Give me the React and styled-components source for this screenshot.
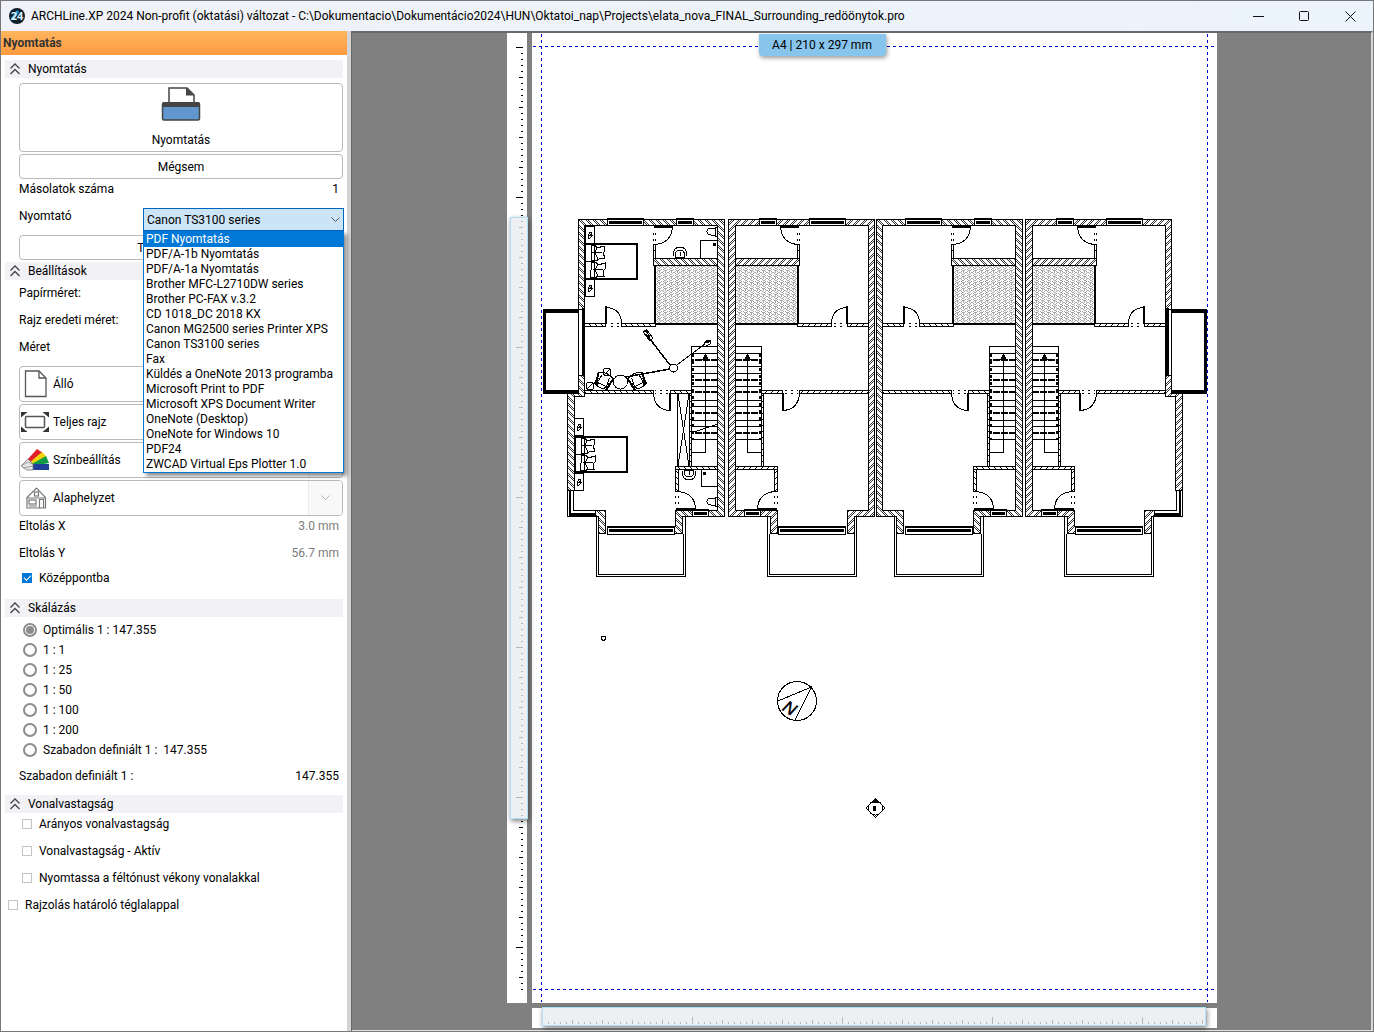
import React, { useState } from "react";
import styled, { createGlobalStyle, css } from "styled-components";

const GlobalStyle = createGlobalStyle`
  * { box-sizing: border-box; }
  html, body { margin: 0; padding: 0; }
  body { font-family: Roboto, "Open Sans", sans-serif; font-size: 12px; line-height: 16px; color: #000; }
  button, input, select { font: inherit; color: inherit; }
`;

/* ---------- window frame ---------- */

const Window = styled.div`
  display: flex;
  flex-direction: column;
  height: 100vh;
  min-height: 940px;
  border: 1px solid #777;
  background: #fff;
`;

const TitleBar = styled.header`
  display: flex;
  align-items: center;
  height: 30px;
  flex: none;
  padding-left: 8px;
  background: linear-gradient(90deg, #f0f2f8, #ebf3fb);
`;

const TitleText = styled.h1`
  flex: 1;
  min-width: 0;
  margin: 0 0 0 6px;
  font-size: 12px;
  font-weight: 400;
  white-space: nowrap;
  overflow: hidden;
  text-overflow: ellipsis;
`;

const WindowButton = styled.button`
  display: grid;
  place-items: center;
  width: 46px;
  height: 30px;
  padding: 0;
  border: 0;
  background: transparent;
`;

const Body = styled.div`
  display: grid;
  grid-template-columns: 346px 5px minmax(0, 1fr);
  flex: 1;
  min-height: 0;
`;

const Splitter = styled.div`
  background: #d4d4d4;
  border-right: 1px solid #696969;
`;

/* ---------- side panel ---------- */

const Panel = styled.aside`
  display: flex;
  flex-direction: column;
  min-width: 0;
`;

const PanelTitle = styled.h2`
  margin: 0 0 5px;
  padding: 0 2px;
  height: 24px;
  font-size: 12px;
  font-weight: 700;
  line-height: 24px;
  color: #333;
  background: linear-gradient(#ffb55f, #ff9a40);
`;

const Section = styled.section`
  display: flex;
  flex-direction: column;
  padding: 0 4px;
  margin-bottom: ${(p) => p.$after || 0}px;
`;

const SectionHead = styled.button`
  display: flex;
  align-items: center;
  gap: 8px;
  height: 18px;
  padding: 0 5px;
  border: 0;
  background: #f1f1f6;
  text-align: left;
`;

const SectionBody = styled.div`
  display: flex;
  flex-direction: column;
  gap: ${(p) => p.$gap || 0}px;
  padding: ${(p) => p.$top || 0}px 0 0 14px;
`;

const Group = styled.div`
  display: flex;
  flex-direction: column;
  gap: ${(p) => p.$gap || 0}px;
  padding-top: ${(p) => p.$top || 0}px;
`;

const frame = css`
  border: 1px solid #b9b9b9;
  border-radius: 4px;
  background: #fff;
`;

const PushButton = styled.button`
  ${frame}
  height: 25px;
  padding: 0;
`;

const PrintButton = styled(PushButton)`
  display: flex;
  flex-direction: column;
  align-items: center;
  justify-content: space-between;
  height: 69px;
  padding: 2px 0 3px;
`;

const SplitBox = styled.div`
  ${frame}
  display: flex;
  height: 36px;
  overflow: hidden;
`;

const SplitMain = styled.button`
  display: flex;
  flex: 1;
  align-items: center;
  gap: 4px;
  padding: 0 1px;
  border: 0;
  background: transparent;
`;

const SplitArrow = styled.button`
  display: grid;
  place-items: center;
  width: 34px;
  padding: 0;
  border: 0;
  border-left: 1px solid #ececec;
  background: #f8f8f8;
`;

const Field = styled.div`
  display: flex;
  justify-content: space-between;
  height: 20px;
  line-height: 20px;
  padding-right: 4px;
`;

const ValueInput = styled.input`
  width: 100px;
  height: 20px;
  padding: 0;
  border: 0;
  background: transparent;
  text-align: right;
  &:disabled { color: #7c7c7c; }
`;

const PrinterRow = styled.div`
  position: relative;
  display: flex;
  justify-content: space-between;
  height: 25px;
  line-height: 20px;
`;

const ComboWrap = styled.div`
  position: relative;
  align-self: flex-end;
  width: 201px;
  margin-right: -1px;
`;

const Combo = styled.select`
  display: block;
  width: 100%;
  height: 23px;
  padding: 0 20px 0 3px;
  border: 1px solid #0067c0;
  border-radius: 0;
  background: #cce4f7;
  appearance: none;
`;

const ComboArrow = styled.svg`
  position: absolute;
  right: 4px;
  top: 9px;
  pointer-events: none;
`;

const OptionList = styled.ul`
  position: absolute;
  z-index: 5;
  top: 23px;
  left: 0;
  right: 0;
  margin: 0;
  padding: 0;
  list-style: none;
  border: 1px solid #0078d7;
  background: #fff;
  box-shadow: 3px 3px 4px rgba(0, 0, 0, 0.45);
`;

const Option = styled.li`
  height: 15px;
  padding: 0 2px;
  line-height: 15px;
  white-space: nowrap;
  background: ${(p) => (p.$active ? "#0078d7" : "transparent")};
  color: ${(p) => (p.$active ? "#fff" : "#000")};
`;

const Choice = styled.label`
  display: flex;
  align-items: center;
  gap: ${(p) => (p.$radio ? 6 : 7)}px;
  height: 20px;
  padding-left: ${(p) => (p.$radio ? 4 : 3)}px;
  white-space: pre;
`;

const CheckInput = styled.input`
  appearance: none;
  display: grid;
  place-items: center;
  width: 10px;
  height: 10px;
  margin: 0;
  border: 1px solid #c4c4c4;
  background: #fff;
  &:checked { border-color: #0078d7; background: #0078d7; }
  &:checked::after {
    content: "";
    width: 6px;
    height: 3px;
    border: solid #fff;
    border-width: 0 0 1px 1px;
    transform: translateY(-1px) rotate(-45deg);
  }
`;

const RadioInput = styled.input`
  appearance: none;
  display: grid;
  place-items: center;
  width: 14px;
  height: 14px;
  margin: 0;
  border: 2px solid #8c8c8c;
  border-radius: 50%;
  background: #fff;
  &:checked::after {
    content: "";
    width: 8px;
    height: 8px;
    border-radius: 50%;
    background: #8c8c8c;
  }
`;

/* ---------- preview ---------- */

const Stage = styled.main`
  display: flex;
  justify-content: center;
  min-width: 0;
  padding: 0 0 2px;
  background: #808080;
  border-top: 2px solid #696969;
  border-right: 2px solid #d8d8d8;
  border-bottom: 1px solid #e4e4e4;
`;

const Sheet = styled.div`
  display: grid;
  grid-template-columns: 20px minmax(0, 685px);
  grid-template-rows: minmax(0, 1fr) 20px;
  gap: 5px;
  width: 710px;
  max-width: 100%;
`;

const RulerBox = styled.div`
  position: relative;
  min-width: 0;
  background: #fff;
  grid-column: ${(p) => (p.$horizontal ? 2 : 1)};
`;

const Slider = styled.div`
  position: absolute;
  z-index: 1;
  border: 1px solid #aee0f8;
  background: rgba(233, 234, 238, 0.78);
  box-shadow: 1px 2px 5px rgba(0, 0, 0, 0.5);
  ${(p) =>
    p.$horizontal
      ? "left: 10px; right: 11px; top: -1px; height: 19px;"
      : "left: 3px; width: 18px; top: 19%; height: 62%;"}
`;

const Paper = styled.div`
  position: relative;
  min-width: 0;
  min-height: 0;
  background: #fff;
`;

const SizeBadge = styled.div`
  position: absolute;
  top: 1px;
  left: 227px;
  width: 127px;
  height: 22px;
  border-radius: 0 0 4px 4px;
  line-height: 22px;
  text-align: center;
  white-space: nowrap;
  background: #88c5ec;
  box-shadow: 1px 2px 4px rgba(0, 0, 0, 0.4);
`;

const Art = styled.svg`
  display: block;
  width: 100%;
  height: 100%;
`;

/* ---------- icons ---------- */

const AppIcon = () => (
  <svg width="16" height="16" viewBox="0 0 16 16" aria-hidden="true">
    <circle cx="8" cy="8" r="8" fill="#10202c" />
    <path d="M3 11.500L9 3" stroke="#2a9fd8" strokeWidth="3" />
    <text x="8" y="12" fontSize="11" fontWeight="700" textAnchor="middle" fill="#d9f1ff" fontFamily="Open Sans, sans-serif">24</text>
  </svg>
);

const DoubleChevron = () => (
  <svg width="10" height="12" viewBox="0 0 10 12" fill="none" stroke="#444" strokeWidth="1.300" aria-hidden="true">
    <path d="M0.500 5.500L5 1l4.500 4.500M0.500 11L5 6.500L9.500 11" />
  </svg>
);

const Chevron = ({ color }) => (
  <svg width="9" height="6" viewBox="0 0 9 6" fill="none" stroke={color} aria-hidden="true">
    <path d="M0.500 0.500l4 4l4-4" />
  </svg>
);

const PrinterIcon = () => (
  <svg width="40" height="36" viewBox="0 0 40 36" aria-hidden="true">
    <path d="M8 18V2h18l7 7v9" fill="#fff" stroke="#444" strokeWidth="1.500" />
    <path d="M25 1.500l8 8h-8z" fill="#444" />
    <rect x="1.500" y="17" width="37" height="17" rx="1.500" fill="#6196cf" stroke="#444" strokeWidth="1.500" />
    <path d="M1 18q0-2 2-2h34q2 0 2 2v3H1z" fill="#444" />
  </svg>
);

const PageIcon = () => (
  <svg width="28" height="30" viewBox="0 0 28 30" aria-hidden="true">
    <path d="M4.500 2h13.500l7 7v18.500H4.500z" fill="#fff" stroke="#555" strokeWidth="1.300" />
    <path d="M18 2v7h7" fill="none" stroke="#555" strokeWidth="1.300" />
  </svg>
);

const FitIcon = () => (
  <svg width="28" height="22" viewBox="0 0 28 22" aria-hidden="true">
    <rect x="4.500" y="5.500" width="19" height="11" rx="1" fill="none" stroke="#555" strokeWidth="1.500" />
    <path d="M0 6.500V1h6.500zM28 6.500V1h-6.500zM0 15.500V21h6.500zM28 15.500V21h-6.500z" fill="#333" />
  </svg>
);

const SwatchIcon = () => (
  <svg width="28" height="24" viewBox="0 0 28 24" aria-hidden="true">
    <path d="M6 12L16 1l6 4L8 16z" fill="#e0202a" />
    <path d="M8 15L21 4l5 5L10 17z" fill="#f6d40c" />
    <path d="M9 17l16-9 3 7-16 3z" fill="#0f9b45" />
    <path d="M12 16h16v6H12z" fill="#1f3f98" />
    <path d="M0 18L7 11l5 5v6L6 22z" fill="#e8e8e8" stroke="#777" strokeWidth="0.800" />
    <path d="M0 18l7-4 5 2M2 20l10-2" fill="none" stroke="#888" strokeWidth="0.800" />
  </svg>
);

const HouseIcon = () => (
  <svg width="28" height="24" viewBox="0 0 28 24" fill="none" stroke="#777" strokeWidth="1.200" aria-hidden="true">
    <path d="M6 22V11.500L15.500 2L24.500 11.500V22z" />
    <rect x="13.500" y="6" width="4" height="4" />
    <rect x="8" y="14" width="7" height="4" />
    <path d="M18.500 22v-8.500h4V22M6 12h19M8 20h8" />
  </svg>
);

/* ---------- floor plan ---------- */

const Glazing = ({ x, y, w, h = 8 }) => (
  <g>
    <rect x={x} y={y} width={w} height={h} fill="#fff" stroke="none" />
    <rect x={x} y={y} width={w} height={2} fill="#000" stroke="none" />
    <rect x={x + 2} y={y + 3} width={w - 4} height={3} fill="#000" stroke="none" />
    <rect x={x} y={y + h - 1} width={w} height={1} fill="#000" stroke="none" />
    <path d={`M${x + 0.5} ${y}v${h}M${x + w - 0.5} ${y}v${h}`} />
  </g>
);

const treads = [353, 366, 373, 386, 400, 406, 420, 426, 439];
const heavyTreads = [360, 380, 392, 413, 433];

const Dwelling = ({ end }) => (
  <g fill="none" stroke="#000">
    <rect x="735" y="266" width="63" height="57" fill="url(#tiles)" stroke="none" />
    <path
      fill="url(#brick)"
      fillRule="evenodd"
      d={
        end
          ? "M728.5 219.500H874.500V309.500H868.500V225.500H735.500V510.500H777.500V526.500H778.500V533.500H770.500V516.500H728.500Z"
          : "M728.500 219.500H874.500V516.500H854.500V533.500H847.500V510.500H868.500V225.500H735.500V510.500H777.500V533.500H770.500V516.500H728.500Z"
      }
    />
    <rect x="735.5" y="258.5" width="64" height="7" fill="url(#brick)" />
    <path d="M798 266V323" strokeWidth="2" />
    <path d="M735 324H799" strokeWidth="2" />
    <path d="M797.5 244V258M799.500 244V258M797 250.500h3" />
    <path fill="url(#thin)" d="M797.500 323.500h34v3h-34zM847.500 323.500h21v3h-21zM761.500 390.500h21v3h-21zM799.500 390.500h69v3h-69zM761.500 393.500h2v73h-2zM735.500 466.500h42v3h-42zM774.500 469.500h3v22h-3z" />
    <path d="M831.500 323Q832 308 847.500 307.500M780.500 227Q782 244 799 244.500M799.500 394Q798 410 782.500 410.500M775 491.500Q758 493 757.500 509" />
    <path strokeWidth="2" d="M847 306V324M780 227H799M783 393V411M757 509H777" />
    <path strokeDasharray="2 4" d="M834 323.500h12M834 326.500h12M785 390.500h13M785 393.500h13M797.500 233v10M799.500 233v10M774.500 496v10M777.500 496v10" />

    <path d="M735 346.500H761.500V467M747.500 355V452.500H761" />
    <path d={treads.map((y) => `M735 ${y}.5H761`).join("")} />
    <path strokeWidth="2" strokeDasharray="7 1" d={heavyTreads.map((y) => `M735 ${y}H761`).join("")} />
    <path strokeWidth="2" strokeDasharray="3 4" d="M760 354V440" />
    <path d="M744 360L747.500 353L751 360Z" fill="#000" stroke="none" />

    <Glazing x={759} y={218} w={18} />
    <Glazing x={809} y={218} w={37} />
    <Glazing x={744} y={509} w={17} />
    <Glazing x={778} y={526} w={68} h={9} />
    <path d="M767.500 517V576.500H856.500V517M769.500 534V574.500H854.500V534" />

    {end && (
      <g>
        <path fill="url(#brick)" d="M868.500 375.500H874.500V390.500H885.500V490.500H878.500V396.500H868.500Z" />
        <path fill="url(#brick)" d="M847.500 510.500H857.500V516.500H854.500V533.500H847.500Z" />
        <path d="M857 510.500H879.500V490M857 516.500H885.500V490M857 513.500H882.500V490" />
        <path d="M857 515H883V490" strokeWidth="2" />
        <rect x="868.5" y="309.500" width="6" height="66" />
        <path d="M870 308V375" strokeWidth="3" />
        <path d="M874 311H910M874 392H910" strokeWidth="4" />
        <path d="M908.500 309V394" strokeWidth="3" />
      </g>
    )}
  </g>
);

const Bed = ({ x, y }) => (
  <g transform={`translate(${x} ${y})`}>
    <path d="M0 1H52V36H0" strokeWidth="2" />
    <path d="M0.500 0V36M0 18.500H10" />
    <path d="M6 3l4-1 2 3 7-2 1 5-2 2 2 5-6 1-3 2-5-1 1-7zM6 20l5-1 2 3 7-2 0 6-2 2 1 5-6 0-3 2-5-1 1-7z" fill="#fff" />
    <path d="M12 4l-2 6 3 6M13 21l-3 6 3 6M7 9h10M8 26h10" />
    <path d="M9 0.500V36" />
  </g>
);

const Nightstand = ({ x, y }) => (
  <g transform={`translate(${x} ${y})`}>
    <rect x="0.5" y="0.5" width="9" height="17" />
    <path d="M3 10l2-4 2 1-1 4-2 2-1-2 4-3M4 13l4-4" />
  </g>
);

const Armchair = ({ x, y, angle }) => (
  <g transform={`translate(${x} ${y}) rotate(${angle})`}>
    <path d="M-8 -5Q0 -9 8 -5L7 7Q0 10 -7 7ZM-4 -4L-5 5L5 5L4 -4M-7 1h3M7 1h-3M-6 4l3 4M6 4l-3 4" />
    <path d="M-8 -5L-6 7M8 -5L6 7" strokeWidth="2" />
  </g>
);

const Basin = ({ x, y, flip = 1 }) => (
  <g transform={`translate(${x} ${y}) scale(1 ${flip})`}>
    <path d="M-7 3Q-7 -6 0 -6Q7 -6 7 3M-5 4Q-5 -3 0 -3Q5 -3 5 4M-5 4H5M0 3V-1" />
  </g>
);

const Toilet = ({ x, y }) => (
  <path d={`M${x + 12} ${y}h-3v9h3M${x + 9} ${y + 1}h-4a4 3.500 0 0 0 0 7h4`} />
);

const Furniture = () => (
  <g fill="none" stroke="#000">
    <Bed x={585} y={243} />
    <Bed x={575} y={436} />
    <Nightstand x={585} y={226} />
    <Nightstand x={585} y={279} />
    <Nightstand x={574} y={418} />
    <Nightstand x={574} y={473} />
    <Basin x={680} y={253} />
    <Basin x={689} y={474} flip={-1} />
    <Toilet x={706} y={227} />
    <Toilet x={706} y={497} />
    <path d="M718 240.500H700.500V258M718 486.500H701.500V470" />
    <rect x="713" y="243" width="3" height="3" fill="#000" stroke="none" />
    <rect x="703" y="472" width="3" height="3" fill="#000" stroke="none" />
    <path d="M677.500 393V467M689.500 393V467M678 394L689 466M689 394L678 466M691 433L718 424" />
    <circle cx="673.5" cy="368" r="4" />
    <path d="M670 365L646 334M626 377L670 369" strokeWidth="1.500" />
    <path d="M677 365L705 344" />
    <path d="M643 332l4-2 6 8-3 3zM646 331l4 6M703 345l4-5 4 0-1 4-6 3z" />
    <path d="M643 332l4-2M706 342l5-1" strokeWidth="2" />
    <circle cx="620.5" cy="382" r="7" />
    <circle cx="590" cy="386" r="4" />
    <circle cx="607" cy="372" r="4" />
    <path d="M587 389l6-6M604 375l6-6" />
    <Armchair x={604} y={380} angle={25} />
    <Armchair x={637} y={380} angle={-25} />
  </g>
);

const FloorPlan = () => (
  <Art viewBox="532 33 685 970" shapeRendering="crispEdges" role="img" aria-label="Alaprajz">
    <defs>
      <pattern id="brick" width="7" height="7" patternUnits="userSpaceOnUse">
        <rect width="7" height="7" fill="#fff" />
        <path d="M-1 8L8 -1M-1 3L3 -1M1 8L8 1" stroke="#000" strokeWidth="0.800" fill="none" />
      </pattern>
      <pattern id="thin" width="6" height="6" patternUnits="userSpaceOnUse">
        <rect width="6" height="6" fill="#fff" />
        <path d="M0 6L6 0" stroke="#000" />
      </pattern>
      <pattern id="tiles" width="6" height="6" patternUnits="userSpaceOnUse">
        <path d="M0 0.500h3M3 1.500h1M4 2.500h2M3 3.500h1M0 3.500h1M1 4.500h2M3 5.500h1M5 5.500h1M1.500 1v2" stroke="#a6a6a6" fill="none" />
      </pattern>
    </defs>

    <g stroke="#0000d0" strokeDasharray="3 3" fill="none">
      <path d="M533 46.500H1216M533 989.500H1216M541.500 34V1002M1207.500 34V1002" />
    </g>

    <Dwelling />
    <g transform="translate(1751 0) scale(-1 1)"><Dwelling /></g>
    <g transform="translate(297 0)"><Dwelling end /></g>
    <g transform="translate(1453 0) scale(-1 1)"><Dwelling end /></g>
    <Furniture />

    <g fill="none" stroke="#000">
      <path d="M601.500 636.500h4v3l-2 1-2-1z" />
      <circle cx="797" cy="701" r="19.500" />
      <path d="M778 701L811.500 687L795 720" />
      <text transform="translate(790 708) rotate(32)" y="6" textAnchor="middle" fontFamily="Liberation Sans, sans-serif" fontSize="17" fontStyle="italic" fill="#000" stroke="#000" strokeWidth="0.500">N</text>
      <path d="M875.500 799L885 808L875.500 817.500L866 808Z" />
      <circle cx="875.500" cy="808" r="7" />
      <path d="M871 803L875.500 799L880 803ZM873 806h3v5h-3z" fill="#000" stroke="none" />
    </g>
  </Art>
);

const tickLength = (i) => (i % 25 === 0 ? 7 : i % 5 === 0 ? 4 : 2);

const VerticalRuler = () => (
  <RulerBox>
    <Art viewBox="507 33 20 970" shapeRendering="crispEdges" aria-hidden="true">
      <path
        stroke="#000"
        d={Array.from({ length: 158 }, (_, i) => `M523 ${47 + i * 6}.5h-${tickLength(i)}`).join("")}
      />
    </Art>
    <Slider />
  </RulerBox>
);

const HorizontalRuler = () => (
  <RulerBox $horizontal>
    <Art viewBox="532 1008 685 20" shapeRendering="crispEdges" aria-hidden="true">
      <path
        stroke="#000"
        d={Array.from({ length: 111 }, (_, i) => `M${542 + i * 6}.5 1024v-${tickLength(i)}`).join("")}
      />
    </Art>
    <Slider $horizontal />
  </RulerBox>
);

/* ---------- panel content ---------- */

const printers = [
  "PDF Nyomtatás", "PDF/A-1b Nyomtatás", "PDF/A-1a Nyomtatás", "Brother MFC-L2710DW series",
  "Brother PC-FAX v.3.2", "CD 1018_DC 2018 KX", "Canon MG2500 series Printer XPS", "Canon TS3100 series",
  "Fax", "Küldés a OneNote 2013 programba", "Microsoft Print to PDF", "Microsoft XPS Document Writer",
  "OneNote (Desktop)", "OneNote for Windows 10", "PDF24", "ZWCAD Virtual Eps Plotter 1.0",
];

const scales = [
  "Optimális 1 : 147.355", "1 : 1", "1 : 25", "1 : 50", "1 : 100", "1 : 200", "Szabadon definiált 1 :  147.355",
];

const Head = ({ children }) => (
  <SectionHead type="button" aria-expanded="true"><DoubleChevron />{children}</SectionHead>
);

const ValueField = ({ id, label, value, disabled }) => (
  <Field>
    <label htmlFor={id}>{label}</label>
    {value !== undefined && <ValueInput id={id} defaultValue={value} disabled={disabled} />}
  </Field>
);

const SplitButton = ({ icon, label }) => (
  <SplitBox>
    <SplitMain type="button">{icon}{label}</SplitMain>
    <SplitArrow type="button" aria-label={`${label} – lista`}><Chevron color="#b5b5b5" /></SplitArrow>
  </SplitBox>
);

const Check = ({ label, checked }) => (
  <Choice><CheckInput type="checkbox" defaultChecked={checked} />{label}</Choice>
);

function PrinterPicker() {
  const [printer, setPrinter] = useState("Canon TS3100 series");
  const [active, setActive] = useState(0);
  return (
    <PrinterRow>
      <label htmlFor="printer">Nyomtató</label>
      <ComboWrap>
        <Combo id="printer" value={printer} onChange={(e) => setPrinter(e.target.value)}>
          {printers.map((p) => <option key={p}>{p}</option>)}
        </Combo>
        <ComboArrow width="9" height="6" viewBox="0 0 9 6" fill="none" stroke="#555">
          <path d="M0.500 0.500l4 4l4-4" />
        </ComboArrow>
        <OptionList role="listbox" aria-label="Nyomtató">
          {printers.map((p, i) => (
            <Option
              key={p}
              role="option"
              aria-selected={i === active}
              $active={i === active}
              onMouseEnter={() => setActive(i)}
              onClick={() => setPrinter(p)}
            >
              {p}
            </Option>
          ))}
        </OptionList>
      </ComboWrap>
    </PrinterRow>
  );
}

export default function App() {
  return (
    <>
      <GlobalStyle />
      <Window>
        <TitleBar>
          <AppIcon />
          <TitleText>
            {"ARCHLine.XP 2024 Non-profit (oktatási) változat - C:\\Dokumentacio\\Dokumentácio2024\\HUN\\Oktatoi_nap\\Projects\\elata_nova_FINAL_Surrounding_redöönytok.pro"}
          </TitleText>
          <WindowButton type="button" aria-label="Kis méret">
            <svg width="11" height="11" stroke="#111"><path d="M0 5.500h11" /></svg>
          </WindowButton>
          <WindowButton type="button" aria-label="Teljes méret">
            <svg width="11" height="11" fill="none" stroke="#111"><rect x="0.500" y="0.500" width="9" height="9" rx="1" /></svg>
          </WindowButton>
          <WindowButton type="button" aria-label="Bezárás">
            <svg width="11" height="11" stroke="#111"><path d="M0.500 0.500l10 10M10.500 0.500l-10 10" /></svg>
          </WindowButton>
        </TitleBar>
        <Body>
          <Panel>
            <PanelTitle>Nyomtatás</PanelTitle>

            <Section $after={2}>
              <Head>Nyomtatás</Head>
              <SectionBody $top={5}>
                <Group $gap={2}>
                  <PrintButton type="button"><PrinterIcon />Nyomtatás</PrintButton>
                  <PushButton type="button">Mégsem</PushButton>
                </Group>
                <Group $gap={7}>
                  <ValueField id="copies" label="Másolatok száma" value="1" />
                  <PrinterPicker />
                </Group>
                <Group $top={4}>
                  <PushButton type="button">Tulajdonságok...</PushButton>
                </Group>
              </SectionBody>
            </Section>

            <Section $after={11}>
              <Head>Beállítások</Head>
              <SectionBody $top={3}>
                <Group $gap={7}>
                  <ValueField label="Papírméret:" />
                  <ValueField label="Rajz eredeti méret:" />
                  <ValueField label="Méret" />
                </Group>
                <Group $top={9} $gap={2}>
                  <SplitButton icon={<PageIcon />} label="Álló" />
                  <SplitButton icon={<FitIcon />} label="Teljes rajz" />
                  <SplitButton icon={<SwatchIcon />} label="Színbeállítás" />
                  <SplitButton icon={<HouseIcon />} label="Alaphelyzet" />
                </Group>
                <Group $gap={7}>
                  <ValueField id="offset-x" label="Eltolás X" value="3.0 mm" disabled />
                  <ValueField id="offset-y" label="Eltolás Y" value="56.7 mm" disabled />
                </Group>
                <Group $top={5}>
                  <Check label="Középpontba" checked />
                </Group>
              </SectionBody>
            </Section>

            <Section $after={9}>
              <Head>Skálázás</Head>
              <SectionBody $top={3} $gap={6}>
                <Group role="radiogroup" aria-label="Skálázás">
                  {scales.map((s, i) => (
                    <Choice key={s} $radio>
                      <RadioInput type="radio" name="scale" defaultChecked={i === 0} />{s}
                    </Choice>
                  ))}
                </Group>
                <ValueField id="custom-scale" label="Szabadon definiált 1 :" value="147.355" />
              </SectionBody>
            </Section>

            <Section $after={7}>
              <Head>Vonalvastagság</Head>
              <SectionBody $top={1} $gap={7}>
                <Check label="Arányos vonalvastagság" />
                <Check label="Vonalvastagság - Aktív" />
                <Check label="Nyomtassa a féltónust vékony vonalakkal" />
              </SectionBody>
            </Section>

            <Section>
              <Check label="Rajzolás határoló téglalappal" />
            </Section>
          </Panel>
          <Splitter />
          <Stage>
            <Sheet>
              <VerticalRuler />
              <Paper>
                <FloorPlan />
                <SizeBadge>A4 | 210 x 297 mm</SizeBadge>
              </Paper>
              <HorizontalRuler />
            </Sheet>
          </Stage>
        </Body>
      </Window>
    </>
  );
}
